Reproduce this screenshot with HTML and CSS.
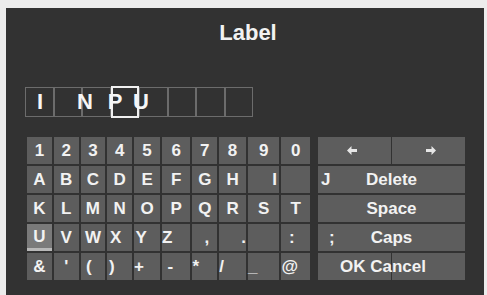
FILE: index.html
```html
<!DOCTYPE html>
<html>
<head>
<meta charset="utf-8">
<link rel="stylesheet" href="styles.css">
</head>
<body>
<div class="screen">
  <div class="title">Label</div>
  <div class="input">
    <div class="boxes">
      <div class="box"></div><div class="box"></div><div class="box"></div><div class="box cur"></div>
      <div class="box"></div><div class="box"></div><div class="box"></div><div class="box"></div>
    </div>
    <div class="typed">
      <span class="ch c1">I</span><span class="ch c2">N</span><span class="ch c3">P</span><span class="ch c4">U</span>
    </div>
  </div>
  <div class="keyboard">
    <div class="grid">
      <div class="key">1</div><div class="key">2</div><div class="key">3</div><div class="key">4</div><div class="key">5</div>
      <div class="key">6</div><div class="key">7</div><div class="key">8</div><div class="key">9</div><div class="key">0</div>

      <div class="key">A</div><div class="key">B</div><div class="key">C</div><div class="key">D</div><div class="key">E</div>
      <div class="key">F</div><div class="key">G</div><div class="key">H</div><div class="key r12">I</div><div class="key"></div>

      <div class="key">K</div><div class="key">L</div><div class="key">M</div><div class="key">N</div><div class="key">O</div>
      <div class="key">P</div><div class="key">Q</div><div class="key">R</div><div class="key">S</div><div class="key">T</div>

      <div class="key focus">U</div><div class="key">V</div><div class="key">W</div><div class="key l4">X</div><div class="key l6">Y</div>
      <div class="key l10">Z</div><div class="key r2">,</div><div class="key r12">.</div><div class="key"></div><div class="key l4">:</div>

      <div class="key">&amp;</div><div class="key">'</div><div class="key l4">(</div><div class="key l8">)</div><div class="key l8">+</div>
      <div class="key l6">-</div><div class="key l10">*</div><div class="key l12">/</div><div class="key l12">_</div><div class="key l6">@</div>
    </div>
    <div class="side">
      <div class="split">
        <div class="key arrow left"><svg width="10" height="9" viewBox="0 0 10 9"><path d="M0 4.5 L4.5 0 L4.5 3 L10 3 L10 6 L4.5 6 L4.5 9 Z" fill="#e6e6e6"/></svg></div>
        <div class="key arrow right"><svg width="10" height="9" viewBox="0 0 10 9"><path d="M10 4.5 L5.5 0 L5.5 3 L0 3 L0 6 L5.5 6 L5.5 9 Z" fill="#e6e6e6"/></svg></div>
      </div>
      <div class="key wide"><span class="stray">J</span><span class="word">Delete</span><span></span></div>
      <div class="key wide"><span class="stray"></span><span class="word">Space</span><span></span></div>
      <div class="key wide"><span class="stray semi">;</span><span class="word">Caps</span><span></span></div>
      <div class="split stack">
        <div class="key half1"></div>
        <div class="key half2"></div>
        <div class="okc">OK Cancel</div>
      </div>
    </div>
  </div>
</div>
</body>
</html>
```
FILE: styles.css
```css
html, body {
  margin: 0;
  padding: 0;
}
body {
  background: #ececec;
  width: 487px;
  height: 295px;
  overflow: hidden;
  font-family: "Liberation Sans", Arial, sans-serif;
}
.screen {
  margin: 8px 0 0 6px;
  width: 478px;
  height: 287px;
  background: #323232;
  padding: 12px 15px 0 21px;
  box-sizing: border-box;
  color: #f2f2f2;
}
.title {
  font-weight: bold;
  font-size: 22px;
  line-height: 26px;
  text-align: center;
}
.input {
  margin: 41px 0 0 -2px;
  display: grid;
  width: 228px;
}
.boxes, .typed {
  grid-area: 1 / 1;
}
.boxes {
  display: grid;
  grid-template-columns: repeat(8, 1fr);
  height: 30px;
}
.box {
  border: 1px solid #6c6c6c;
}
.box.cur {
  border: 2px solid #f0f0f0;
  margin: -1px 0;
}
.typed {
  display: flex;
  align-items: center;
  height: 30px;
}
.ch {
  width: 20px;
  text-align: center;
  font-family: "Liberation Sans", Arial, sans-serif;
  font-weight: 700;
  font-size: 22px;
  line-height: 30px;
  color: #f6f6f6;
}
.c1 { margin-left: 5px; }
.c2 { margin-left: 25px; }
.c3 { margin-left: 10px; }
.c4 { margin-left: 6px; }
.keyboard {
  display: flex;
  gap: 8px;
  margin-top: 20px;
}
.grid {
  width: 283px;
  display: grid;
  grid-template-columns: repeat(10, 1fr);
  grid-auto-rows: 27px;
  gap: 2px;
}
.key {
  background: #5d5d5d;
  font-weight: bold;
  font-size: 17px;
  line-height: 27px;
  text-align: center;
  box-sizing: border-box;
}
.key.focus {
  background: #7a7a7a;
  border-bottom: 3px solid #b8b8b8;
  line-height: 25px;
}
.l4 { padding-right: 8px; }
.l6 { padding-right: 12px; }
.l8 { padding-right: 16px; }
.l10 { padding-right: 18px; }
.l12 { padding-right: 22px; }
.r2 { padding-left: 4px; }
.r12 { padding-left: 22px; }
.side {
  width: 147px;
  display: flex;
  flex-direction: column;
  gap: 2px;
}
.split {
  display: grid;
  grid-template-columns: 1fr 1fr;
  column-gap: 1px;
  height: 27px;
}
.arrow {
  display: flex;
  align-items: center;
  justify-content: flex-start;
}
.arrow.left { padding-left: 29px; }
.arrow.right { padding-left: 34px; }
.wide {
  height: 27px;
  display: grid;
  grid-template-columns: 1fr auto 1fr;
  text-align: left;
}
.stray {
  padding-left: 3px;
}
.stray.semi {
  padding-left: 11px;
}
.stack .half1, .stack .half2 {
  grid-row: 1;
}
.stack .half1 { grid-column: 1; }
.stack .half2 { grid-column: 2; }
.okc {
  grid-row: 1;
  grid-column: 1 / 3;
  justify-self: center;
  font-weight: bold;
  font-size: 17px;
  line-height: 27px;
  padding-right: 17px;
}
```
